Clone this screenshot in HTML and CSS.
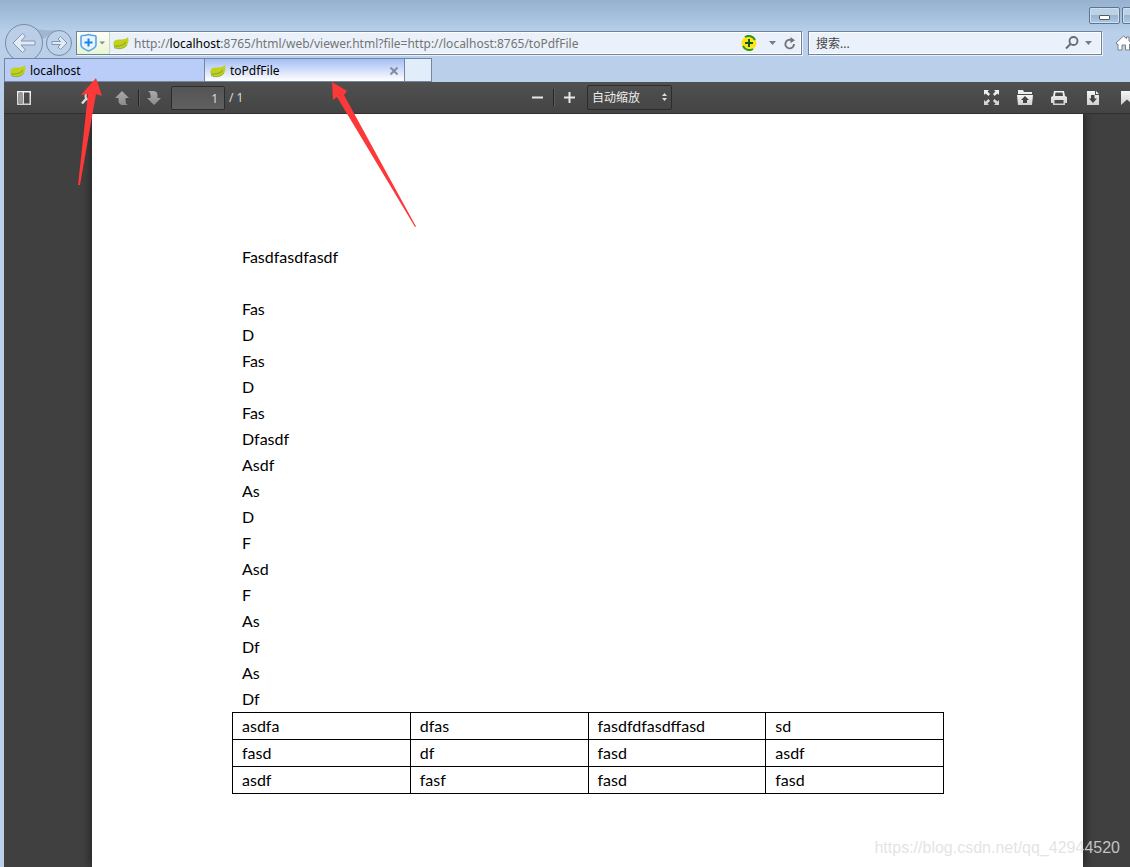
FILE: index.html
```html
<!DOCTYPE html>
<html lang="zh-CN">
<head>
<meta charset="utf-8">
<title>toPdfFile</title>
<link rel="stylesheet" href="styles.css">
</head>
<body>
<svg class="defs" width="0" height="0" aria-hidden="true">
  <defs>
    <linearGradient id="silver" x1="0" y1="0" x2="0" y2="1"><stop offset="0" stop-color="#f6f6f6"/><stop offset="1" stop-color="#cfcfcf"/></linearGradient>
    <linearGradient id="gray" x1="0" y1="0" x2="0" y2="1"><stop offset="0" stop-color="#aaa"/><stop offset="1" stop-color="#8c8c8c"/></linearGradient>
    <symbol id="leaf" viewBox="0 0 16 14">
      <path d="M0.500 9C0 5 2 3.500 7 3.500C12 3.500 14 2.500 15 1C16.500 6 14.500 12 8 12.500C4 12.800 1 12 0.500 9Z" fill="#c3d01c"/>
      <path d="M1 10C7 10.500 11 9 13 6" fill="none" stroke="#86ac32" stroke-width="1.200"/>
      <path d="M1 11.500C5 13.500 11 13 14 9" fill="none" stroke="#8fb03a" stroke-width="1"/>
    </symbol>
  </defs>
</svg>
<header class="chrome">
  <div class="titlebar">
    <button class="winbtn" aria-label="最小化"><i class="minimize"></i></button>
    <button class="winbtn" aria-label="最大化"></button>
  </div>
  <div class="navbar">
    <svg class="history" width="72" height="34" viewBox="0 24 72 34" role="img" aria-label="后退 前进">
      <path d="M29 25C37 30 45 31 56 30L48 36L41 40Z" fill="#97adc6" opacity=".7"/>
      <circle cx="24" cy="43" r="18.500" fill="#bacfe7" stroke="#768ca6"/>
      <circle cx="59" cy="43" r="12.500" fill="#bdd2e9" stroke="#768ca6"/>
      <path d="M13 43L22.500 33.500L25.500 36L21 41H35V45H21L25.500 50L22.500 52.500Z" fill="#e1eaf5" stroke="#8398b0"/>
      <path d="M67 43L60.500 36.500L58 39L60.500 41.500H52V44.500H60.500L58 47L60.500 49.500Z" fill="#e1eaf5" stroke="#8398b0"/>
    </svg>
    <div class="address">
      <button class="shield" aria-label="安全">
        <svg width="28" height="20" viewBox="0 0 28 20">
          <path d="M2 3.500Q2 2.500 4 2.500Q7 2.500 9.500 1.500Q12 2.500 15 2.500Q17 2.500 17 4V12Q17 15 9.500 18Q2 15 2 12Z" fill="#e9f5fb" stroke="#5aa5ee" stroke-width="1.600"/>
          <path d="M9.500 5.500V13.500M5.500 9.500H13.500" stroke="#1685ed" stroke-width="2"/>
          <path d="M20.500 8.500H26L23.200 11.500Z" fill="#7f8d92"/>
        </svg>
      </button>
      <svg class="favicon" width="16" height="14"><use href="#leaf"/></svg>
      <div class="url" role="textbox" aria-label="地址" contenteditable="true" spellcheck="false">http://<b>localhost</b>:8765/html/web/viewer.html?file=http://localhost:8765/toPdfFile</div>
      <button class="plain" aria-label="添加">
        <svg width="16" height="16" viewBox="0 0 16 16"><circle cx="8" cy="8" r="7.500" fill="#fee51b"/><path d="M4 2A7 7 0 0 1 14 5M12 14A7 7 0 0 1 2 11" fill="none" stroke="#2b981d" stroke-width="2"/><path d="M8 4V12M4 8H12" stroke="#125b10" stroke-width="2"/></svg>
      </button>
      <button class="plain drop" aria-label="历史"><svg width="7" height="4"><path d="M0 0H7L3.500 4Z" fill="#777d84"/></svg></button>
      <button class="plain" aria-label="刷新">
        <svg width="12" height="13" viewBox="0 0 12 13"><path d="M7.500 3.200A4.300 4.300 0 1 0 10 7" fill="none" stroke="#73777c" stroke-width="1.900"/><path d="M6.500 0L11 3.200L6.500 6.200Z" fill="#73777c"/></svg>
      </button>
    </div>
    <div class="search">
      <input type="text" placeholder="搜索..." aria-label="搜索">
      <button class="plain" aria-label="搜索"><svg width="14" height="14" viewBox="0 0 14 14"><circle cx="8.500" cy="5" r="4" fill="none" stroke="#666c74" stroke-width="1.800"/><path d="M5.500 8L1 12.500" stroke="#666c74" stroke-width="2"/></svg></button>
      <button class="plain" aria-label="搜索选项"><svg width="7" height="4"><path d="M0 0H7L3.500 4Z" fill="#777d84"/></svg></button>
    </div>
    <button class="plain home" aria-label="主页"><svg width="18" height="16" viewBox="0 0 18 16"><path d="M1 8L8.500 1L11.500 3.500V2H14V6L17 8.500L15.500 10L14.500 9V15H10.500V10H7V15H3V9L2 9.500Z" fill="#fff" stroke="#7a8087"/></svg></button>
  </div>
  <nav class="tabs">
    <button class="tab"><svg width="16" height="14"><use href="#leaf"/></svg><span>localhost</span></button>
    <button class="tab active"><svg width="16" height="14"><use href="#leaf"/></svg><span>toPdfFile</span><svg class="close" width="8" height="8" viewBox="0 0 8 8"><path d="M.5.5L7.500 7.500M7.500.5L.5 7.500" stroke="#818ca3" stroke-width="2"/></svg></button>
    <button class="newtab" aria-label="新建标签页"></button>
  </nav>
</header>
<main class="viewer">
  <div class="toolbar">
    <div class="group">
      <button class="tool" aria-label="切换侧栏"><svg width="14" height="14" viewBox="0 0 14 14"><path d="M0 0H14V14H0ZM1.500 1.500V12.500H5.500V1.500ZM7 1.500V12.500H12.500V1.500Z" fill="url(#silver)" fill-rule="evenodd"/><path d="M2 2H5V12H2Z" fill="#999"/></svg></button>
      <button class="tool find" aria-label="查找"><svg width="14" height="14" viewBox="0 0 14 14"><circle cx="8.500" cy="5" r="4" fill="none" stroke="#ddd" stroke-width="2"/><path d="M5.500 7.500L1 12.500" stroke="#ddd" stroke-width="2.500"/></svg></button>
      <button class="tool" aria-label="上一页"><svg width="14" height="14" viewBox="0 0 14 14"><path d="M7 0L14 7H10.500V10Q10.500 13 13 14H7Q3.500 13 3.500 10V7H0Z" fill="url(#gray)"/></svg></button>
      <i class="split"></i>
      <button class="tool" aria-label="下一页"><svg width="14" height="14" viewBox="0 0 14 14"><path d="M7 14L14 7H10.500V4Q10.500 0 6 0H1Q3.500 1 3.500 4V7H0Z" fill="url(#gray)"/></svg></button>
      <input class="pageno" id="page" type="text" value="1">
      <label class="pages" for="page">/ 1</label>
    </div>
    <div class="group zoom">
      <button class="tool" aria-label="缩小"><svg width="11" height="11"><path d="M0 4.500H11V6.500H0Z" fill="#e8e8e8"/></svg></button>
      <i class="split"></i>
      <button class="tool" aria-label="放大"><svg width="11" height="11"><path d="M0 4.500H11V6.500H0ZM4.500 0H6.500V11H4.500Z" fill="#e8e8e8"/></svg></button>
      <div class="scale">
        <select aria-label="缩放"><option>自动缩放</option></select>
        <svg width="5" height="8" viewBox="0 0 5 8"><path d="M0 3L2.500 0L5 3ZM0 5H5L2.500 8Z" fill="#ddd"/></svg>
      </div>
    </div>
    <div class="group actions">
      <button class="tool" aria-label="全屏"><svg width="15" height="15" viewBox="0 0 15 15"><path d="M0 0H5L3.500 1.500L6 4L4.500 6L1.500 3.500L0 5ZM15 0V5L13.500 3.500L10.500 6L9 4L11.500 1.500L10 0ZM0 15V10L1.500 11.500L4.500 9L6 11L3.500 13.500L5 15ZM15 15H10L11.500 13.500L9 11L10.500 9L13.500 11.500L15 10Z" fill="url(#silver)"/></svg></button>
      <button class="tool" aria-label="打开"><svg width="16" height="15" viewBox="0 0 16 15"><path d="M1 0H6L7 2H15V4H1Z" fill="#eee"/><path d="M0 5H16L15 15H1Z" fill="url(#silver)"/><path d="M8 6L12 10H10V13H6V10H4Z" fill="#444"/></svg></button>
      <button class="tool" aria-label="打印"><svg width="16" height="14" viewBox="0 0 16 14"><path d="M3 0H13L14 5L16 6V12H14V14H2V12H0V6L2 5ZM4.500 1.500L4 5H12L11.500 1.500ZM3.500 9V12.500H12.500V9Z" fill="url(#silver)" fill-rule="evenodd"/></svg></button>
      <button class="tool" aria-label="下载"><svg width="12" height="14" viewBox="0 0 12 14"><path d="M0 0H8V4H12V14H0ZM9 0L12 3H9Z" fill="url(#silver)"/><path d="M4 4H7.500V7.500H10L6 12L2 7.500H4Z" fill="#444"/></svg></button>
      <button class="tool" aria-label="书签"><svg width="12" height="14" viewBox="0 0 12 14"><path d="M0 0H12V14L6 8.500L0 14Z" fill="url(#silver)"/></svg></button>
    </div>
  </div>
  <article class="page">
    <p>Fasdfasdfasdf</p>
    <p>&nbsp;</p>
    <p>Fas</p>
    <p>D</p>
    <p>Fas</p>
    <p>D</p>
    <p>Fas</p>
    <p>Dfasdf</p>
    <p>Asdf</p>
    <p>As</p>
    <p>D</p>
    <p>F</p>
    <p>Asd</p>
    <p>F</p>
    <p>As</p>
    <p>Df</p>
    <p>As</p>
    <p>Df</p>
    <table>
      <tbody>
        <tr><td>asdfa</td><td>dfas</td><td>fasdfdfasdffasd</td><td>sd</td></tr>
        <tr><td>fasd</td><td>df</td><td>fasd</td><td>asdf</td></tr>
        <tr><td>asdf</td><td>fasf</td><td>fasd</td><td>fasd</td></tr>
      </tbody>
    </table>
  </article>
</main>
<svg class="arrows" width="430" height="240" aria-hidden="true">
  <path d="M96 78L102 96L96 94L80 185H78L88 94L81 95ZM332 82L347 91L344 95L416 226.500L415 227L337 97L333 100Z" fill="#fd3838"/>
</svg>
<div class="watermark">https://blog.csdn.net/qq_42944520</div>
</body>
</html>
```

FILE: styles.css
```css
* { box-sizing: border-box; }

body {
  margin: 0;
  min-height: 100vh;
  display: flex;
  flex-direction: column;
  overflow: hidden;
  background: #bad0ea;
  font: 12px/16px "Noto Sans", "Noto Sans CJK SC", sans-serif;
  color: #000;
}

button, input, select {
  margin: 0;
  padding: 0;
  border: 0;
  background: none;
  font: inherit;
  color: inherit;
  outline: 0;
}

svg { display: block; flex: none; }
.defs { position: absolute; }

.chrome { background: linear-gradient(#97b1cf, #a8c4df 20px, #bad0ea 32px); }

.titlebar {
  display: flex;
  justify-content: flex-end;
  gap: 2px;
  height: 24px;
  padding-top: 7px;
  margin-right: -23px;
}

.winbtn {
  display: flex;
  justify-content: center;
  align-items: center;
  width: 31px;
  height: 17px;
  border: 1px solid #5c7592;
  border-radius: 2px;
  background: linear-gradient(#bed2e6 50%, #9ab5d0 50%, #adc9e3);
  box-shadow: inset 0 0 0 1px #cfe0f0;
}

.minimize {
  width: 11px;
  height: 5px;
  margin-top: 4px;
  border: 1px solid #535a65;
  border-radius: 1px;
  background: #fff;
}

.navbar {
  display: flex;
  align-items: center;
  height: 34px;
  padding-top: 4px;
}

.history { align-self: flex-end; margin-right: 4px; }

.address, .search {
  display: flex;
  align-items: center;
  height: 24px;
  border: 1px solid #71839b;
  background: #eaf1fa;
  box-shadow: inset 0 0 0 1px #fff, 1px 1px 0 #e9f2fa;
}

.address { flex: 1; min-width: 0; padding-right: 5px; }
.search { flex: 0 1 294px; min-width: 0; margin-left: 6px; padding: 0 9px 0 7px; gap: 6px; }

.shield {
  display: flex;
  align-items: center;
  height: 22px;
  padding-left: 2px;
  width: 33px;
  border-right: 1px solid #cbd5ca;
  background: linear-gradient(#fdfff4, #e9f6d3);
}

.favicon { margin: 0 5px 0 3px; }

.url {
  flex: 1;
  min-width: 0;
  padding-top: 1px;
  white-space: nowrap;
  color: #747474;
  outline: 0;
}
.url b { font-weight: 400; color: #000; }

.plain { display: flex; align-items: center; }
.drop { margin: 0 8px 0 12px; }
.search input { flex: 1; min-width: 0; padding-top: 1px; }
.search input::placeholder { color: #444; opacity: 1; }
.home { margin: 0 -3px 0 13px; }

.tabs { display: flex; height: 24px; padding-left: 4px; }

.tab {
  display: flex;
  align-items: center;
  gap: 4px;
  width: 201px;
  padding: 1px 6px 0 5px;
  border: 1px solid #74869e;
  background: #b9cdf8;
}
.tab.active {
  width: 200px;
  border-left: 0;
  background: linear-gradient(#a4bef5, #fff);
}
.close { margin-left: auto; }

.newtab {
  width: 27px;
  border: 1px solid #74869e;
  border-left: 0;
  background: #e1edfa;
}

.viewer {
  flex: 1;
  display: flex;
  flex-direction: column;
  margin-left: 4px;
  background: #404040;
}

.toolbar {
  display: flex;
  height: 32px;
  background: linear-gradient(#505050, #444);
  border-bottom: 1px solid #303030;
  color: #d9d9d9;
}

.group { display: flex; align-items: center; }
.zoom { margin-left: auto; }
.actions { margin-left: 303px; margin-right: -13px; gap: 2px; }

.tool {
  display: flex;
  align-items: center;
  justify-content: center;
  width: 32px;
  height: 25px;
}
.group:first-child { padding-left: 4px; }
.find { margin: 0 2px 0 32px; }

.split {
  width: 2px;
  height: 17px;
  margin-right: -2px;
  border-left: 1px solid #242424;
  border-right: 1px solid #5c5c5c;
}

.pageno {
  width: 54px;
  height: 24px;
  margin-left: 1px;
  padding: 1px 6px 0 0;
  border: 1px solid #2c2c2c;
  border-radius: 2px;
  background: linear-gradient(#555, #606060);
  text-align: right;
}
.pages { margin-left: 4px; padding-top: 1px; }

.scale {
  position: relative;
  margin-left: 2px;
}
.scale select {
  appearance: none;
  display: block;
  width: 85px;
  height: 25px;
  padding: 1px 0 0 4px;
  border: 1px solid #2c2c2c;
  border-radius: 2px;
  color: #eee;
}
.scale svg { position: absolute; right: 5px; top: 8px; }

.page {
  flex: 1;
  margin: 0 47px 0 88px;
  padding: 130px 139px 72px 140px;
  background: #fff;
  box-shadow: 0 0 9px 1px #202020;
  clip-path: inset(0 -12px);
  font: 16px/26px Lato, sans-serif;
}

.page p { margin: 0; padding-left: 10px; }

.page table {
  width: 100%;
  table-layout: fixed;
  border-collapse: collapse;
}
.page td {
  height: 27px;
  padding: 0 9px;
  border: 1px solid #000;
}

.arrows { position: absolute; left: 0; top: 0; pointer-events: none; }

.watermark {
  position: absolute;
  right: 10px;
  bottom: 10px;
  font: 16px/18px "Liberation Sans", sans-serif;
  color: rgba(222, 222, 222, .85);
}
```
